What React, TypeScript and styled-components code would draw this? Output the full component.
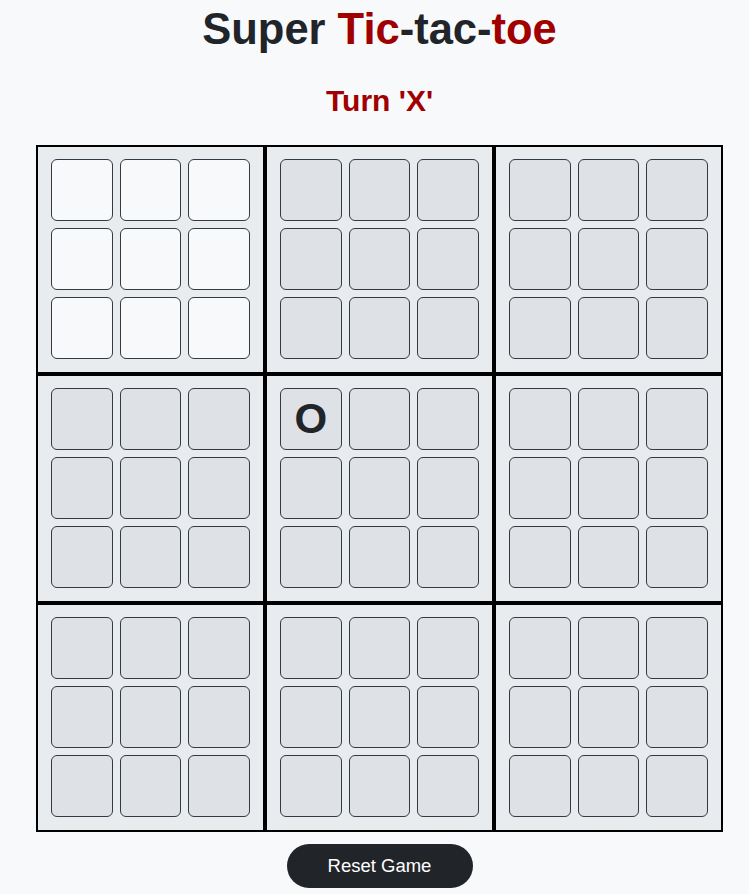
import React, { useState } from "react";
import styled, { createGlobalStyle } from "styled-components";

const GlobalStyle = createGlobalStyle`
  body {
    margin: 0;
    background: #f8f9fa;
    font-family: "Liberation Sans", Arial, Helvetica, sans-serif;
    color: #212529;
  }
`;

const Page = styled.div`
  display: flex;
  flex-direction: column;
  align-items: center;
  padding-left: 10px;
`;

const Title = styled.h1`
  margin: 3px 0 0;
  font-size: 43.5px;
  line-height: 1.2;
  font-weight: 700;
  color: #212529;
`;

const Red = styled.span`
  color: #a00000;
`;

const Turn = styled.h2`
  margin: 28px 0 0;
  font-size: 30px;
  line-height: 1.2;
  font-weight: 700;
  color: #a00000;
`;

const Board = styled.div`
  margin-top: 26px;
  display: grid;
  grid-template-columns: repeat(3, 229px);
  grid-template-rows: repeat(3, 229px);
`;

const SubBoard = styled.div`
  box-sizing: border-box;
  border: 2px solid #000;
  background: #e9ecef;
  padding: 12px 13px 13px;
  display: grid;
  grid-template-columns: repeat(3, 1fr);
  grid-template-rows: repeat(3, 62px);
  gap: 7px;
`;

const Cell = styled.button<{ $active: boolean }>`
  box-sizing: border-box;
  margin: 0;
  padding: 0;
  border: 1px solid #343a40;
  border-radius: 6px;
  background: ${(p) => (p.$active ? "#f8f9fa" : "#dee2e6")};
  font-family: "Liberation Sans", Arial, sans-serif;
  font-size: 42px;
  font-weight: 700;
  color: #212529;
  display: flex;
  align-items: center;
  justify-content: center;
  cursor: ${(p) => (p.$active ? "pointer" : "default")};
`;

const ResetButton = styled.button`
  margin-top: 12px;
  width: 186px;
  height: 44px;
  border: none;
  border-radius: 22px;
  background: #212529;
  color: #ffffff;
  font-family: "Liberation Sans", Arial, sans-serif;
  font-size: 18.5px;
  cursor: pointer;
`;

type Mark = "X" | "O" | null;

const initialBoards = (): Mark[][] => {
  const b: Mark[][] = Array.from({ length: 9 }, () => Array(9).fill(null));
  b[4][0] = "O";
  return b;
};

const App: React.FC = () => {
  const [boards, setBoards] = useState<Mark[][]>(initialBoards);
  const [turn, setTurn] = useState<"X" | "O">("X");
  const [activeBoard, setActiveBoard] = useState<number>(0);

  const play = (bi: number, ci: number) => {
    if (bi !== activeBoard || boards[bi][ci]) return;
    const next = boards.map((b) => b.slice());
    next[bi][ci] = turn;
    setBoards(next);
    setTurn(turn === "X" ? "O" : "X");
    setActiveBoard(ci);
  };

  const reset = () => {
    setBoards(Array.from({ length: 9 }, () => Array(9).fill(null)));
    setTurn("X");
    setActiveBoard(4);
  };

  return (
    <>
      <GlobalStyle />
      <Page>
        <Title>
          Super <Red>Tic</Red>-tac-<Red>toe</Red>
        </Title>
        <Turn>Turn '{turn}'</Turn>
        <Board>
          {boards.map((cells, bi) => (
            <SubBoard key={bi}>
              {cells.map((mark, ci) => (
                <Cell
                  key={ci}
                  $active={bi === activeBoard}
                  onClick={() => play(bi, ci)}
                >
                  {mark}
                </Cell>
              ))}
            </SubBoard>
          ))}
        </Board>
        <ResetButton onClick={reset}>Reset Game</ResetButton>
      </Page>
    </>
  );
};

export default App;
